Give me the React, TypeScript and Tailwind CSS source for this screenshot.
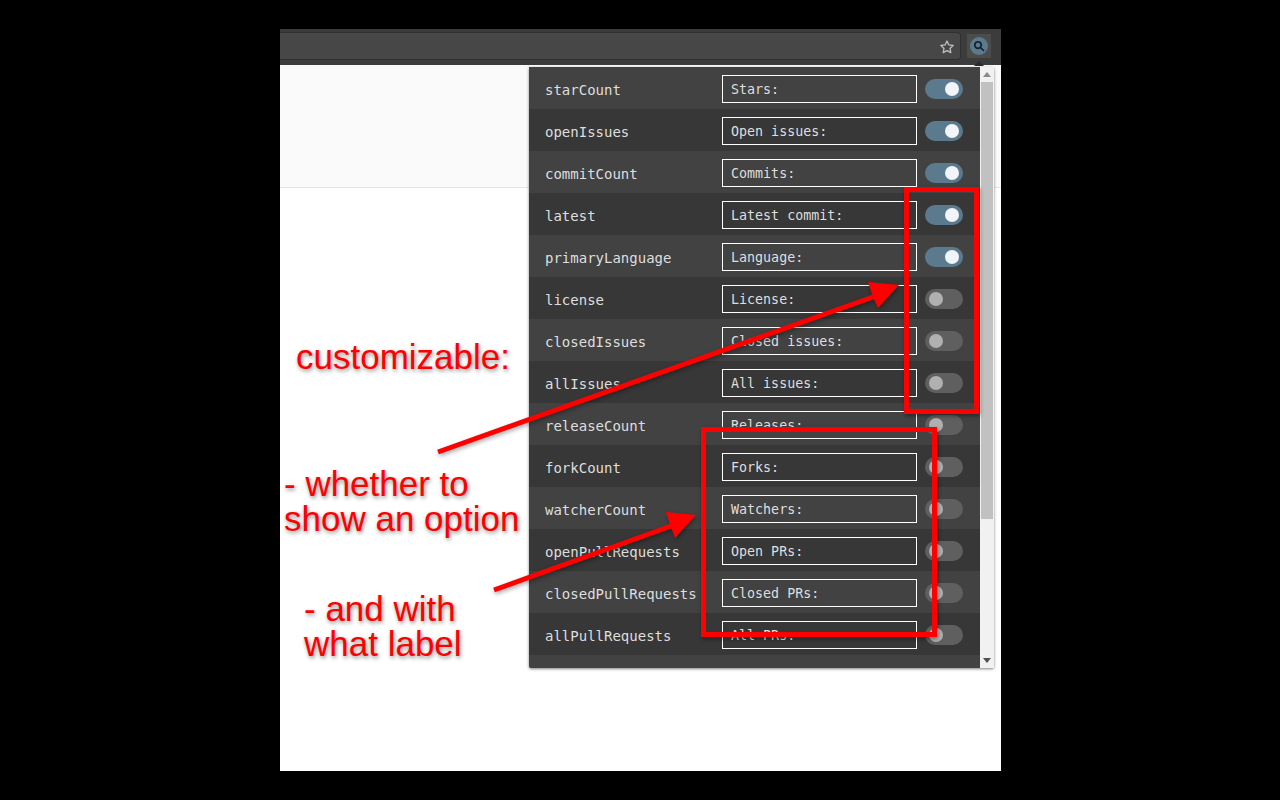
const rows = [
  { name: 'starCount', label: 'Stars:', on: true },
  { name: 'openIssues', label: 'Open issues:', on: true },
  { name: 'commitCount', label: 'Commits:', on: true },
  { name: 'latest', label: 'Latest commit:', on: true },
  { name: 'primaryLanguage', label: 'Language:', on: true },
  { name: 'license', label: 'License:', on: false },
  { name: 'closedIssues', label: 'Closed issues:', on: false },
  { name: 'allIssues', label: 'All issues:', on: false },
  { name: 'releaseCount', label: 'Releases:', on: false },
  { name: 'forkCount', label: 'Forks:', on: false },
  { name: 'watcherCount', label: 'Watchers:', on: false },
  { name: 'openPullRequests', label: 'Open PRs:', on: false },
  { name: 'closedPullRequests', label: 'Closed PRs:', on: false },
  { name: 'allPullRequests', label: 'All PRs:', on: false },
];

function Toggle({ on }: { on: boolean }) {
  return (
    <div className={`flex h-5 w-[38px] items-center rounded-full px-1 ${on ? 'justify-end bg-[#5b7a8e]' : 'justify-start bg-[#5f5f5f]'}`}>
      <div className={`h-[14px] w-[14px] rounded-full ${on ? 'bg-[#f1f5f9]' : 'bg-[#b0b0b0]'}`} />
    </div>
  );
}

function Row({ name, label, on, odd }: { name: string; label: string; on: boolean; odd: boolean }) {
  return (
    <div className={`flex h-[42px] shrink-0 items-center pt-[2px] pl-4 ${odd ? 'bg-[#373737]' : 'bg-[#424242]'}`}>
      <div className="w-[177px] pt-[2px] text-[14px] text-[#dedede] font-['DejaVu_Sans_Mono',monospace]">{name}</div>
      <div className="flex h-7 w-[195px] items-center border border-white px-2 pt-[2px] text-[13.33px] text-[#dedede] font-['DejaVu_Sans_Mono',monospace]">
        {label}
      </div>
      <div className="ml-2">
        <Toggle on={on} />
      </div>
    </div>
  );
}

function Note({ text, className }: { text: string; className: string }) {
  return (
    <div className={`absolute text-[35px] leading-[35px] whitespace-pre text-[#ff0000] font-['Liberation_Sans',sans-serif] [text-shadow:1px_2px_4px_rgba(0,0,0,0.45)] ${className}`}>
      {text}
    </div>
  );
}

export default function App() {
  return (
    <div className="relative h-[800px] w-[1280px] overflow-hidden bg-black pt-[29px] pl-[280px]">
      <div className="relative h-[742px] w-[721px] bg-white">
        {/* browser toolbar */}
        <div className="flex h-9 items-center bg-[#3c3c3c] pb-[2px]">
          <div className="flex h-7 w-[681px] items-center justify-end rounded-r-sm border border-l-0 border-[#303030] bg-[#474747] pt-[2px] pr-[5px]">
            <svg width="16" height="16" viewBox="0 0 24 24" fill="none" stroke="#bdbdbd" strokeWidth="2" strokeLinejoin="round">
              <path d="M12 3l2.8 5.9 6.4.8-4.7 4.4 1.2 6.4L12 17.4l-5.7 3.1 1.2-6.4-4.7-4.4 6.4-.8z" />
            </svg>
          </div>
          <div className="ml-[6px] flex h-6 w-6 items-center justify-center bg-[#4c4c4c]">
            <div className="flex h-[18px] w-[18px] items-center justify-center rounded-full bg-[#5b7a8e]">
              <svg width="12" height="12" viewBox="0 0 24 24" fill="none" stroke="#16242c" strokeWidth="3.5">
                <circle cx="10" cy="10" r="6.5" />
                <path d="M15 15l7 7" />
              </svg>
            </div>
          </div>
        </div>
        {/* page header behind the popup */}
        <div className="h-[123px] border-b border-[#e5e5e5] bg-[#fafafa]" />

        {/* extension popup */}
        <svg className="absolute top-[32px] left-[694px]" width="10" height="5" viewBox="0 0 10 5"><path d="M5 0l5 5H0z" fill="#2b2b2b" /></svg>
        <div className="absolute top-[38px] left-[249px] flex h-[601px] w-[465px] rounded-[2px] bg-[#424242] shadow-[0_1px_3px_rgba(0,0,0,0.5)]">
          <div className="flex h-full w-[451px] flex-col overflow-hidden">
            {rows.map((r, i) => <Row key={r.name} {...r} odd={i % 2 === 1} />)}
          </div>
          <div className="flex h-full w-[14px] flex-col items-center bg-[#f1f1f1]">
            <svg className="mt-[5px] shrink-0" width="8" height="5" viewBox="0 0 8 5"><path d="M4 0l4 5H0z" fill="#8a8a8a" /></svg>
            <div className="mt-[5px] h-[437px] w-3 bg-[#c1c1c1]" />
            <svg className="mt-auto mb-[5px] shrink-0" width="8" height="5" viewBox="0 0 8 5"><path d="M0 0h8L4 5z" fill="#505050" /></svg>
          </div>
        </div>
      </div>

      {/* annotations drawn on top of the screenshot */}
      <div className="absolute top-[187px] left-[904px] h-[227px] w-[75px] border-[5px] border-[#ff0000] shadow-[1px_2px_4px_rgba(0,0,0,0.4)]" />
      <div className="absolute top-[427px] left-[701px] h-[210px] w-[236px] border-[5px] border-[#ff0000] shadow-[1px_2px_4px_rgba(0,0,0,0.4)]" />
      <svg className="absolute top-0 left-0 drop-shadow-[1px_2px_2px_rgba(0,0,0,0.35)]" width="1280" height="800" viewBox="0 0 1280 800" fill="#ff0000" stroke="none">
        <path d="M438 452L873 297" stroke="#ff0000" strokeWidth="5" />
        <path d="M899 285L868 282L873 297L878 308z" />
        <path d="M494 590L671 526" stroke="#ff0000" strokeWidth="5" />
        <path d="M696 515L666 512L671 527L675 538z" />
      </svg>
      <Note text="customizable:" className="top-[339px] left-[296px]" />
      <Note text={'- whether to\nshow an option'} className="top-[466px] left-[284px]" />
      <Note text={'- and with\nwhat label'} className="top-[591px] left-[304px]" />
    </div>
  );
}
